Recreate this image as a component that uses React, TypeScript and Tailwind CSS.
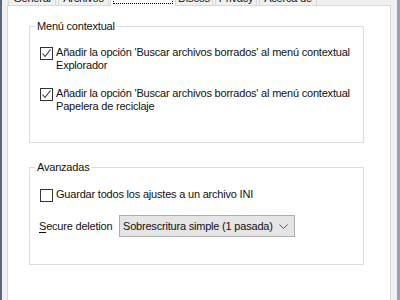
import type { ReactNode } from "react";

const font = { fontFamily: '"Liberation Sans", Arial, sans-serif' };

function CheckBox({ checked }: { checked: boolean }) {
  return (
    <svg width="13" height="13" viewBox="0 0 13 13" className="flex-none">
      <rect x="0.5" y="0.5" width="12" height="12" fill="#fff" stroke="#333" />
      {checked && (
        <polyline points="2.5,6.5 5,9.5 10.5,2.5" fill="none" stroke="#333" strokeWidth="1.1" />
      )}
    </svg>
  );
}

function Option({ checked, children }: { checked: boolean; children: ReactNode }) {
  return (
    <label className="flex items-start gap-[3px] leading-[13px] whitespace-nowrap">
      <span className="pt-[1px]">
        <CheckBox checked={checked} />
      </span>
      <span>{children}</span>
    </label>
  );
}

function Group({ title, className, children }: { title: string; className: string; children: ReactNode }) {
  return (
    <fieldset className={`ml-[21px] w-[335px] min-w-0 border border-[#dcdcdc] ${className}`}>
      <legend className="ml-[5px] px-[2px] leading-[15px]">{title}</legend>
      {children}
    </fieldset>
  );
}

const tabs = [
  { label: "General", w: "w-[48px]" },
  { label: "Archivos", w: "w-[51px]" },
  { label: "Opciones", w: "w-[66px]" },
  { label: "Discos", w: "w-[38px]" },
  { label: "Privacy", w: "w-[42px]" },
  { label: "Acerca de", w: "w-[58px]" },
];

export default function App() {
  return (
    <div
      className="w-[400px] h-[300px] overflow-hidden flex bg-[#f0f0f0] text-[11px] tracking-[-0.2px] text-[#111]"
      style={font}
    >
      <div className="w-[2px] flex-none bg-[#56687a]" />
      <div className="flex-1 flex flex-col pl-[5px] pr-[6px]">
        {/* Tab strip, mostly cut off above the crop */}
        <div className="flex items-end -mt-[16px] h-[21px] pl-[1px] whitespace-nowrap">
          {tabs.map((t, i) =>
            i === 2 ? (
              <div
                key={t.label}
                className={`${t.w} h-[21px] -mx-[1px] -mb-px relative z-10 bg-white border border-b-0 border-[#d9d9d9] p-[2px]`}
              >
                <div className="h-full border border-dotted border-black text-center leading-[12px] text-transparent">
                  {t.label}
                </div>
              </div>
            ) : (
              <div
                key={t.label}
                className={`${t.w} h-[19px] mr-[2px] bg-[#f0f0f0] border border-b-0 border-[#d9d9d9] text-center leading-[22px] overflow-hidden`}
              >
                {t.label}
              </div>
            )
          )}
        </div>

        {/* Tab panel */}
        <div className="flex-1 bg-white border border-[#d9d9d9] border-b-0">
          <Group title="Menú contextual" className="mt-[13px] pb-[29px]">
            <div className="pl-[10px] pt-[12px] flex flex-col gap-[15px]">
              <Option checked>
                Añadir la opción 'Buscar archivos borrados' al menú contextual
                <br />
                Explorador
              </Option>
              <Option checked>
                Añadir la opción 'Buscar archivos borrados' al menú contextual
                <br />
                Papelera de reciclaje
              </Option>
            </div>
          </Group>

          <Group title="Avanzadas" className="mt-[17px] pb-[27px]">
            <div className="pl-[10px] pt-[13px]">
              <Option checked={false}>Guardar todos los ajustes a un archivo INI</Option>
            </div>
            <div className="flex items-center pl-[9px] mt-[13px] whitespace-nowrap">
              <span className="w-[80px]">
                <span className="underline underline-offset-2">S</span>ecure deletion
              </span>
              <div className="w-[176px] h-[22px] flex items-center justify-between bg-[#e5e5e5] border border-[#adadad] pl-[3px] pr-[6px]">
                <span>Sobrescritura simple (1 pasada)</span>
                <svg width="9" height="5" viewBox="0 0 9 5">
                  <polyline points="0.5,0.5 4.5,4.5 8.5,0.5" fill="none" stroke="#555" />
                </svg>
              </div>
            </div>
          </Group>
        </div>
      </div>
      <div className="w-[3px] flex-none bg-[#9aa3ab]" />
    </div>
  );
}
